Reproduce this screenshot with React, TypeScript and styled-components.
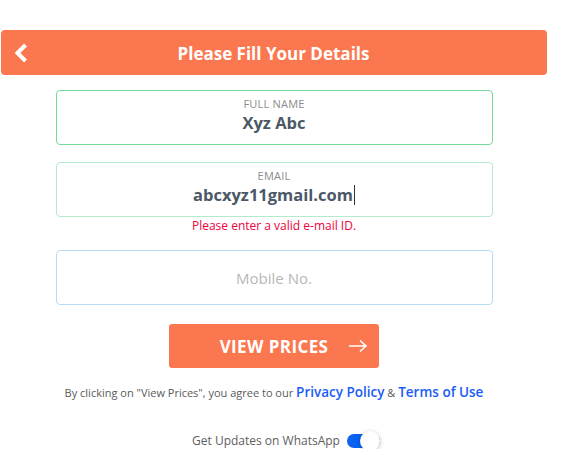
import React, { useState } from "react"
import styled, { createGlobalStyle } from "styled-components"

const GlobalStyle = createGlobalStyle`
  body {
    margin: 0;
    background: #ffffff;
    font-family: "Open Sans", "Noto Sans", sans-serif;
  }
`

const Page = styled.div`
  width: 546px;
  margin-left: 1px;
  padding-top: 30px;
`

const HeaderBar = styled.div`
  display: flex;
  align-items: center;
  height: 45px;
  border-radius: 4px;
  background-color: #fb774f;
`

const BackButton = styled.button`
  display: flex;
  align-items: center;
  justify-content: center;
  width: 40px;
  height: 45px;
  padding: 0;
  margin-left: 1px;
  border: 0;
  background: transparent;
  cursor: pointer;
`

const HeaderTitle = styled.h1`
  flex: 1;
  margin: 2px 42px 0 0;
  text-align: center;
  color: #ffffff;
  font-size: 17px;
  font-weight: 700;
`

const Form = styled.div`
  display: flex;
  flex-direction: column;
  align-items: center;
  width: 437px;
  margin: 15px auto 0;
`

const Field = styled.div<{ $border: string; $gap: number }>`
  display: flex;
  flex-direction: column;
  align-items: center;
  justify-content: center;
  box-sizing: border-box;
  width: 100%;
  height: 55px;
  margin-top: ${(p) => p.$gap}px;
  padding-bottom: 6px;
  border: 1.5px solid ${(p) => p.$border};
  border-radius: 4px;
`

const FieldLabel = styled.div`
  color: #8c8c8c;
  font-size: 11px;
  letter-spacing: 0.2px;
  line-height: 15px;
  text-transform: uppercase;
`

const FieldValue = styled.div`
  color: #4b5966;
  font-size: 16.5px;
  font-weight: 700;
  line-height: 23px;
`

const Caret = styled.span`
  display: inline-block;
  width: 1px;
  height: 20px;
  margin-left: 1px;
  vertical-align: -4px;
  background: #333;
`

const Placeholder = styled.div`
  margin-top: 6px;
  color: #b7b7b7;
  font-size: 15px;
`

const ErrorText = styled.div`
  margin-top: 1px;
  color: #f0003c;
  font-size: 12px;
  line-height: 15px;
`

const PrimaryButton = styled.button`
  display: flex;
  align-items: center;
  justify-content: center;
  gap: 20px;
  width: 210px;
  height: 44px;
  margin-top: 19px;
  padding: 0 0 0 40px;
  border: 0;
  border-radius: 3px;
  background: #fb774f;
  color: #ffffff;
  font-family: inherit;
  font-size: 17px;
  font-weight: 700;
  letter-spacing: 0.4px;
  cursor: pointer;
`

const Terms = styled.p`
  margin: 15px 0 0;
  white-space: nowrap;
  color: #5a5a5a;
  font-size: 11px;
`

const TermsLink = styled.a`
  color: #1a5cf5;
  font-size: 13.5px;
  font-weight: 600;
  text-decoration: none;
`

const WhatsAppRow = styled.label`
  display: flex;
  align-items: center;
  gap: 7px;
  margin: 31px 0 0 24px;
  color: #5e5e5e;
  font-size: 12px;
`

const Toggle = styled.span<{ $on: boolean }>`
  position: relative;
  display: inline-block;
  width: 33px;
  height: 14px;
  border-radius: 7px;
  background: ${(p) => (p.$on ? "#0a62f0" : "#c7c7c7")};

  &::after {
    content: "";
    position: absolute;
    top: -3px;
    left: ${(p) => (p.$on ? "13px" : "0")};
    width: 20px;
    height: 20px;
    border-radius: 50%;
    background: #ffffff;
    box-shadow: 0 1px 4px rgba(0, 0, 0, 0.25);
  }
`

export default function App() {
  const [updates, setUpdates] = useState(true)

  return (
    <Page>
      <GlobalStyle />
      <HeaderBar>
        <BackButton aria-label="Back">
          <svg width="18" height="22" viewBox="0 0 18 22">
            <path
              d="M12.5 3 L4.5 11 L12.5 19"
              fill="none"
              stroke="#ffffff"
              strokeWidth="4"
            />
          </svg>
        </BackButton>
        <HeaderTitle>Please Fill Your Details</HeaderTitle>
      </HeaderBar>
      <Form>
        <Field $border="#74d99c" $gap={0}>
          <FieldLabel>Full Name</FieldLabel>
          <FieldValue>Xyz Abc</FieldValue>
        </Field>
        <Field $border="#b3eacb" $gap={17}>
          <FieldLabel>Email</FieldLabel>
          <FieldValue>
            abcxyz11gmail.com
            <Caret />
          </FieldValue>
        </Field>
        <ErrorText>Please enter a valid e-mail ID.</ErrorText>
        <Field $border="#b9dcf5" $gap={17}>
          <Placeholder>Mobile No.</Placeholder>
        </Field>
        <PrimaryButton>
          VIEW PRICES
          <svg width="20" height="14" viewBox="0 0 20 14">
            <path
              d="M1 7 H18 M12 1.5 L18 7 L12 12.5"
              fill="none"
              stroke="#ffffff"
              strokeWidth="1.6"
            />
          </svg>
        </PrimaryButton>
        <Terms>
          By clicking on "View Prices", you agree to our{" "}
          <TermsLink href="#">Privacy Policy</TermsLink> &amp;{" "}
          <TermsLink href="#">Terms of Use</TermsLink>
        </Terms>
        <WhatsAppRow onClick={() => setUpdates(!updates)}>
          Get Updates on WhatsApp
          <Toggle $on={updates} />
        </WhatsAppRow>
      </Form>
    </Page>
  )
}
